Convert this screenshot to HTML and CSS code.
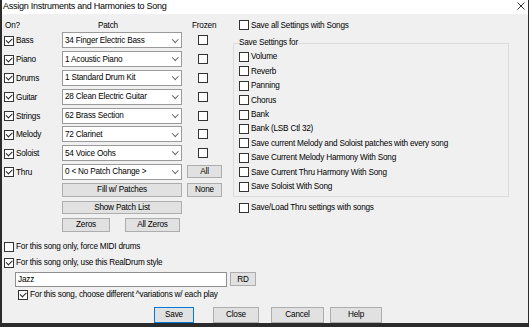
FILE: index.html
```html
<!DOCTYPE html>
<html lang="en">
<head>
  <meta charset="UTF-8" />
  <title>Assign Instruments and Harmonies to Song</title>
  <link rel="stylesheet" href="styles.css">
</head>
<body>
  <div class="window">
    <div class="titlebar">
      <span class="title">Assign Instruments and Harmonies to Song</span>
      <svg class="close" width="8" height="8" viewBox="0 0 8 8">
        <path d="M0.5 0.5 L7.5 7.5 M7.5 0.5 L0.5 7.5" stroke="#333" stroke-width="1" fill="none" />
      </svg>
    </div>
    <div class="content">
      <div class="top">
        <div class="patches">
          <div class="row head">
            <span class="on-label">On?</span>
            <span class="patch-label">Patch</span>
            <span class="frozen-label">Frozen</span>
          </div>
          <div class="row inst">
            <label class="check"><span class="box on"></span>Bass</label>
            <div class="combo">34 Finger Electric Bass</div>
            <span class="box frozen"></span>
          </div>
          <div class="row inst">
            <label class="check"><span class="box on"></span>Piano</label>
            <div class="combo">1 Acoustic Piano</div>
            <span class="box frozen"></span>
          </div>
          <div class="row inst">
            <label class="check"><span class="box on"></span>Drums</label>
            <div class="combo">1 Standard Drum Kit</div>
            <span class="box frozen"></span>
          </div>
          <div class="row inst">
            <label class="check"><span class="box on"></span>Guitar</label>
            <div class="combo">28 Clean Electric Guitar</div>
            <span class="box frozen"></span>
          </div>
          <div class="row inst">
            <label class="check"><span class="box on"></span>Strings</label>
            <div class="combo">62 Brass Section</div>
            <span class="box frozen"></span>
          </div>
          <div class="row inst">
            <label class="check"><span class="box on"></span>Melody</label>
            <div class="combo">72 Clarinet</div>
            <span class="box frozen"></span>
          </div>
          <div class="row inst">
            <label class="check"><span class="box on"></span>Soloist</label>
            <div class="combo">54 Voice Oohs</div>
            <span class="box frozen"></span>
          </div>
          <div class="row inst">
            <label class="check"><span class="box on"></span>Thru</label>
            <div class="combo">0 &lt; No Patch Change &gt;</div>
            <button class="btn side all">All</button>
          </div>
          <div class="row fill-row">
            <span></span>
            <button class="btn fill">Fill w/ Patches</button>
            <button class="btn side none">None</button>
          </div>
          <div class="row show-row">
            <span></span>
            <button class="btn show">Show Patch List</button>
          </div>
          <div class="row zero-row">
            <span></span>
            <div class="zeros">
              <button class="btn zero">Zeros</button>
              <button class="btn allzero">All Zeros</button>
            </div>
          </div>
        </div>

        <div class="settings">
          <label class="opt save-all"><span class="box"></span>Save all Settings with Songs</label>
          <fieldset class="group">
            <legend>Save Settings for</legend>
            <label class="opt item"><span class="box"></span>Volume</label>
            <label class="opt item"><span class="box"></span>Reverb</label>
            <label class="opt item"><span class="box"></span>Panning</label>
            <label class="opt item"><span class="box"></span>Chorus</label>
            <label class="opt item"><span class="box"></span>Bank</label>
            <label class="opt item"><span class="box"></span>Bank (LSB Ctl 32)</label>
            <label class="opt item"><span class="box"></span>Save current Melody and Soloist patches with every song</label>
            <label class="opt item"><span class="box"></span>Save Current Melody Harmony With Song</label>
            <label class="opt item"><span class="box"></span>Save Current Thru Harmony With Song</label>
            <label class="opt item"><span class="box"></span>Save Soloist With Song</label>
          </fieldset>
          <label class="opt thru"><span class="box"></span>Save/Load Thru settings with songs</label>
        </div>
      </div>

      <div class="bottom">
        <label class="opt force"><span class="box"></span>For this song only, force MIDI drums</label>
        <label class="opt realdrum"><span class="box on"></span>For this song only, use this RealDrum style</label>
        <div class="style-row">
          <div class="textbox">Jazz</div>
          <button class="btn rd">RD</button>
        </div>
        <label class="opt vary"><span class="box on"></span>For this song, choose different ^variations w/ each play</label>
        <div class="actions">
          <button class="btn save">Save</button>
          <button class="btn close-btn">Close</button>
          <button class="btn cancel">Cancel</button>
          <button class="btn help">Help</button>
        </div>
      </div>
    </div>
  </div>
</body>
</html>
```

FILE: styles.css
```css
* { margin: 0; padding: 0; box-sizing: border-box; }
body {
  font-family: 'Liberation Sans', Arial, sans-serif;
  font-size: 8.2px;
  letter-spacing: -0.2px;
  color: #000;
  background: #f0f0f0;
}
.window {
  width: 529px;
  height: 327px;
  background: #f0f0f0;
  border-left: 2px solid #2b2b2b;
  border-right: 1px solid #2b2b2b;
  border-bottom: 4px solid #2b2b2b;
  display: flex;
  flex-direction: column;
}
.titlebar {
  height: 14px;
  flex: none;
  background: #fff;
  display: flex;
  align-items: center;
  justify-content: space-between;
  padding: 0 3px 3px 1px;
}
.title {
  font-size: 9px;
  letter-spacing: -0.25px;
  color: #000;
}
.close { display: block; }
.content {
  flex: 1;
  display: flex;
  flex-direction: column;
}
.top { display: flex; }

/* Instrument / patch table */
.patches {
  width: 229px;
  flex: none;
  padding-left: 2px;
}
.row {
  display: grid;
  grid-template-columns: 58px 120px 40px;
  align-items: center;
}
.head {
  height: 17px;
  align-items: end;
  line-height: 10px;
}
.on-label { padding-left: 1px; }
.patch-label { padding-left: 36px; }
.frozen-label { padding-left: 10px; }
.inst { height: 18.8px; }
.check {
  display: flex;
  align-items: center;
  gap: 2px;
  padding-top: 1px;
}
.box {
  width: 10px;
  height: 10px;
  border: 1px solid #333;
  background: #fff;
  position: relative;
  flex: none;
}
.box.on::after {
  content: '';
  position: absolute;
  left: 1px;
  top: 1px;
  width: 5px;
  height: 2.5px;
  border-left: 1px solid #222;
  border-bottom: 1px solid #222;
  transform: rotate(-45deg);
}
.combo {
  height: 16px;
  background: #fff;
  border: 1px solid #9a9a9a;
  display: flex;
  align-items: center;
  justify-content: space-between;
  padding: 0 4px 0 2px;
  white-space: nowrap;
}
.combo::after {
  content: '';
  width: 3.5px;
  height: 3.5px;
  border-right: 1px solid #666;
  border-bottom: 1px solid #666;
  transform: rotate(45deg);
  margin-top: -3px;
}
.frozen { margin-left: 16px; }

.btn {
  font: inherit;
  letter-spacing: inherit;
  color: inherit;
  background: #e1e1e1;
  border: 1px solid #adadad;
  height: 14px;
  display: flex;
  align-items: center;
  justify-content: center;
}
.side { margin-left: 5px; width: 35px; }
.all { height: 13px; }
.fill-row { margin-top: 1.6px; }
.show-row { margin-top: 4px; }
.show { height: 13px; }
.zero-row { margin-top: 4px; }
.zeros {
  display: flex;
  gap: 15px;
}
.zero { width: 48px; }
.allzero { width: 55px; }

/* Save settings */
.settings {
  flex: 1;
  padding-left: 2px;
}
.opt {
  display: flex;
  align-items: center;
  gap: 2px;
  height: 12px;
  white-space: nowrap;
}
.save-all { margin: 5px 0 0 6px; }
.group {
  margin-top: 7px;
  width: 276px;
  border: 1px solid #dcdcdc;
  padding: 1.8px 0 2.2px 5px;
}
.group legend {
  padding: 0;
  line-height: 10px;
}
.item { height: 14.4px; }
.thru { margin: 5px 0 0 6px; }

/* Bottom area */
.bottom { padding-left: 2px; }
.force { margin-top: 9px; }
.realdrum { margin-top: 4px; }
.style-row {
  display: flex;
  align-items: center;
  margin-top: 3px;
  height: 15px;
}
.textbox {
  margin-left: 11px;
  width: 212px;
  height: 15px;
  background: #fff;
  border: 1px solid #8f8f8f;
  padding-left: 2px;
  display: flex;
  align-items: center;
}
.rd { margin-left: 3px; width: 26px; }
.vary { margin: 2px 0 0 14px; }
.actions {
  display: flex;
  margin-top: 6px;
}
.actions .btn { height: 16px; }
.save { margin-left: 150px; width: 40px; border-color: #0078d7; }
.close-btn { margin-left: 19px; width: 46px; }
.cancel { margin-left: 12px; width: 53px; }
.help { margin-left: 6px; width: 52px; }
```
